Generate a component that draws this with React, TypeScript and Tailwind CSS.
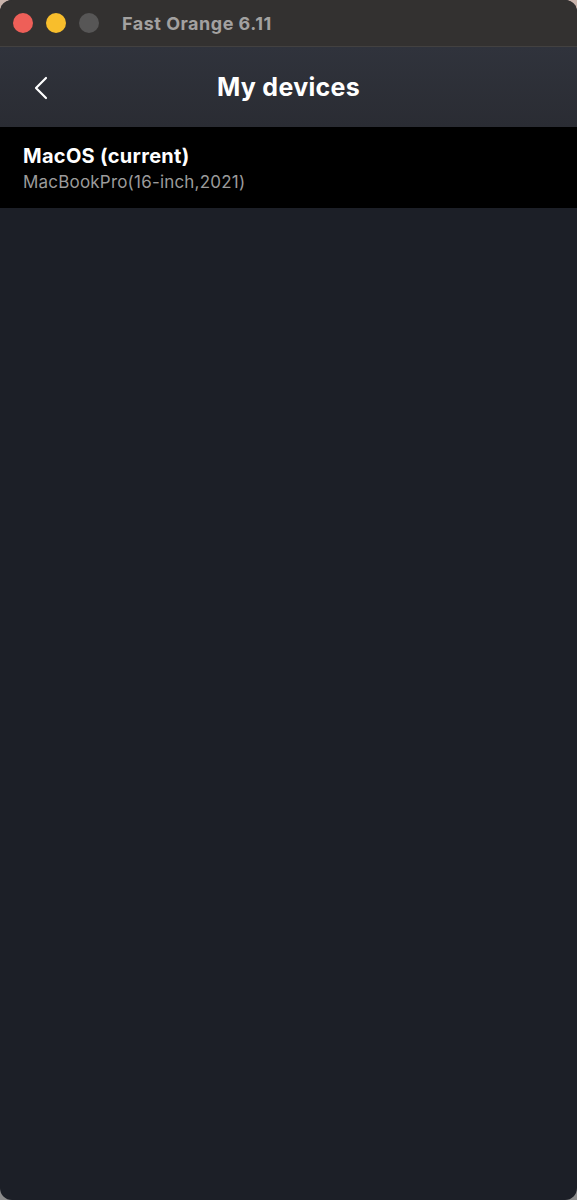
import React from "react";

export default function App() {
  return (
    <div className="w-[577px] h-[1200px] bg-gradient-to-b from-[#c9b3ab] to-[#8c8c8c]" style={{ fontFamily: "Inter, 'Noto Sans', 'Liberation Sans', sans-serif" }}>
      <div className="w-full h-full rounded-[12px] overflow-hidden flex flex-col bg-[#1c1f27]">
        {/* title bar */}
        <div className="h-[47px] bg-[#333130] flex items-center border-b border-[#434140] shrink-0">
          <div className="flex items-center gap-[13px] pl-[13px]">
            <span className="w-[20px] h-[20px] rounded-full bg-[#ee5f58]" />
            <span className="w-[20px] h-[20px] rounded-full bg-[#f8be2c]" />
            <span className="w-[20px] h-[20px] rounded-full bg-[#575656]" />
          </div>
          <span className="ml-[23px] text-[18px] font-bold text-[#a3a1a0] tracking-[0.5px]">Fast Orange 6.11</span>
        </div>
        {/* header */}
        <div className="relative h-[80px] bg-gradient-to-b from-[#30333c] to-[#2a2c33] flex items-center justify-center shrink-0">
          <svg className="absolute left-[32px] top-[29px]" width="18" height="24" viewBox="0 0 18 24" fill="none">
            <path d="M14 2 L4 12 L14 22" stroke="#ffffff" strokeWidth="2.2" strokeLinecap="round" strokeLinejoin="round" />
          </svg>
          <span className="text-[25px] font-bold text-white tracking-[0.3px] pt-[2px]">My devices</span>
        </div>
        {/* device row */}
        <div className="h-[81px] bg-black flex flex-col justify-center pl-[23px] pt-[2px] shrink-0">
          <span className="text-[20px] font-bold text-white leading-[26px] tracking-[0.3px]">MacOS (current)</span>
          <span className="text-[17px] text-[#9b9b9b] leading-[26px] tracking-[0.2px]">MacBookPro(16-inch,2021)</span>
        </div>
        <div className="flex-1" />
      </div>
    </div>
  );
}
